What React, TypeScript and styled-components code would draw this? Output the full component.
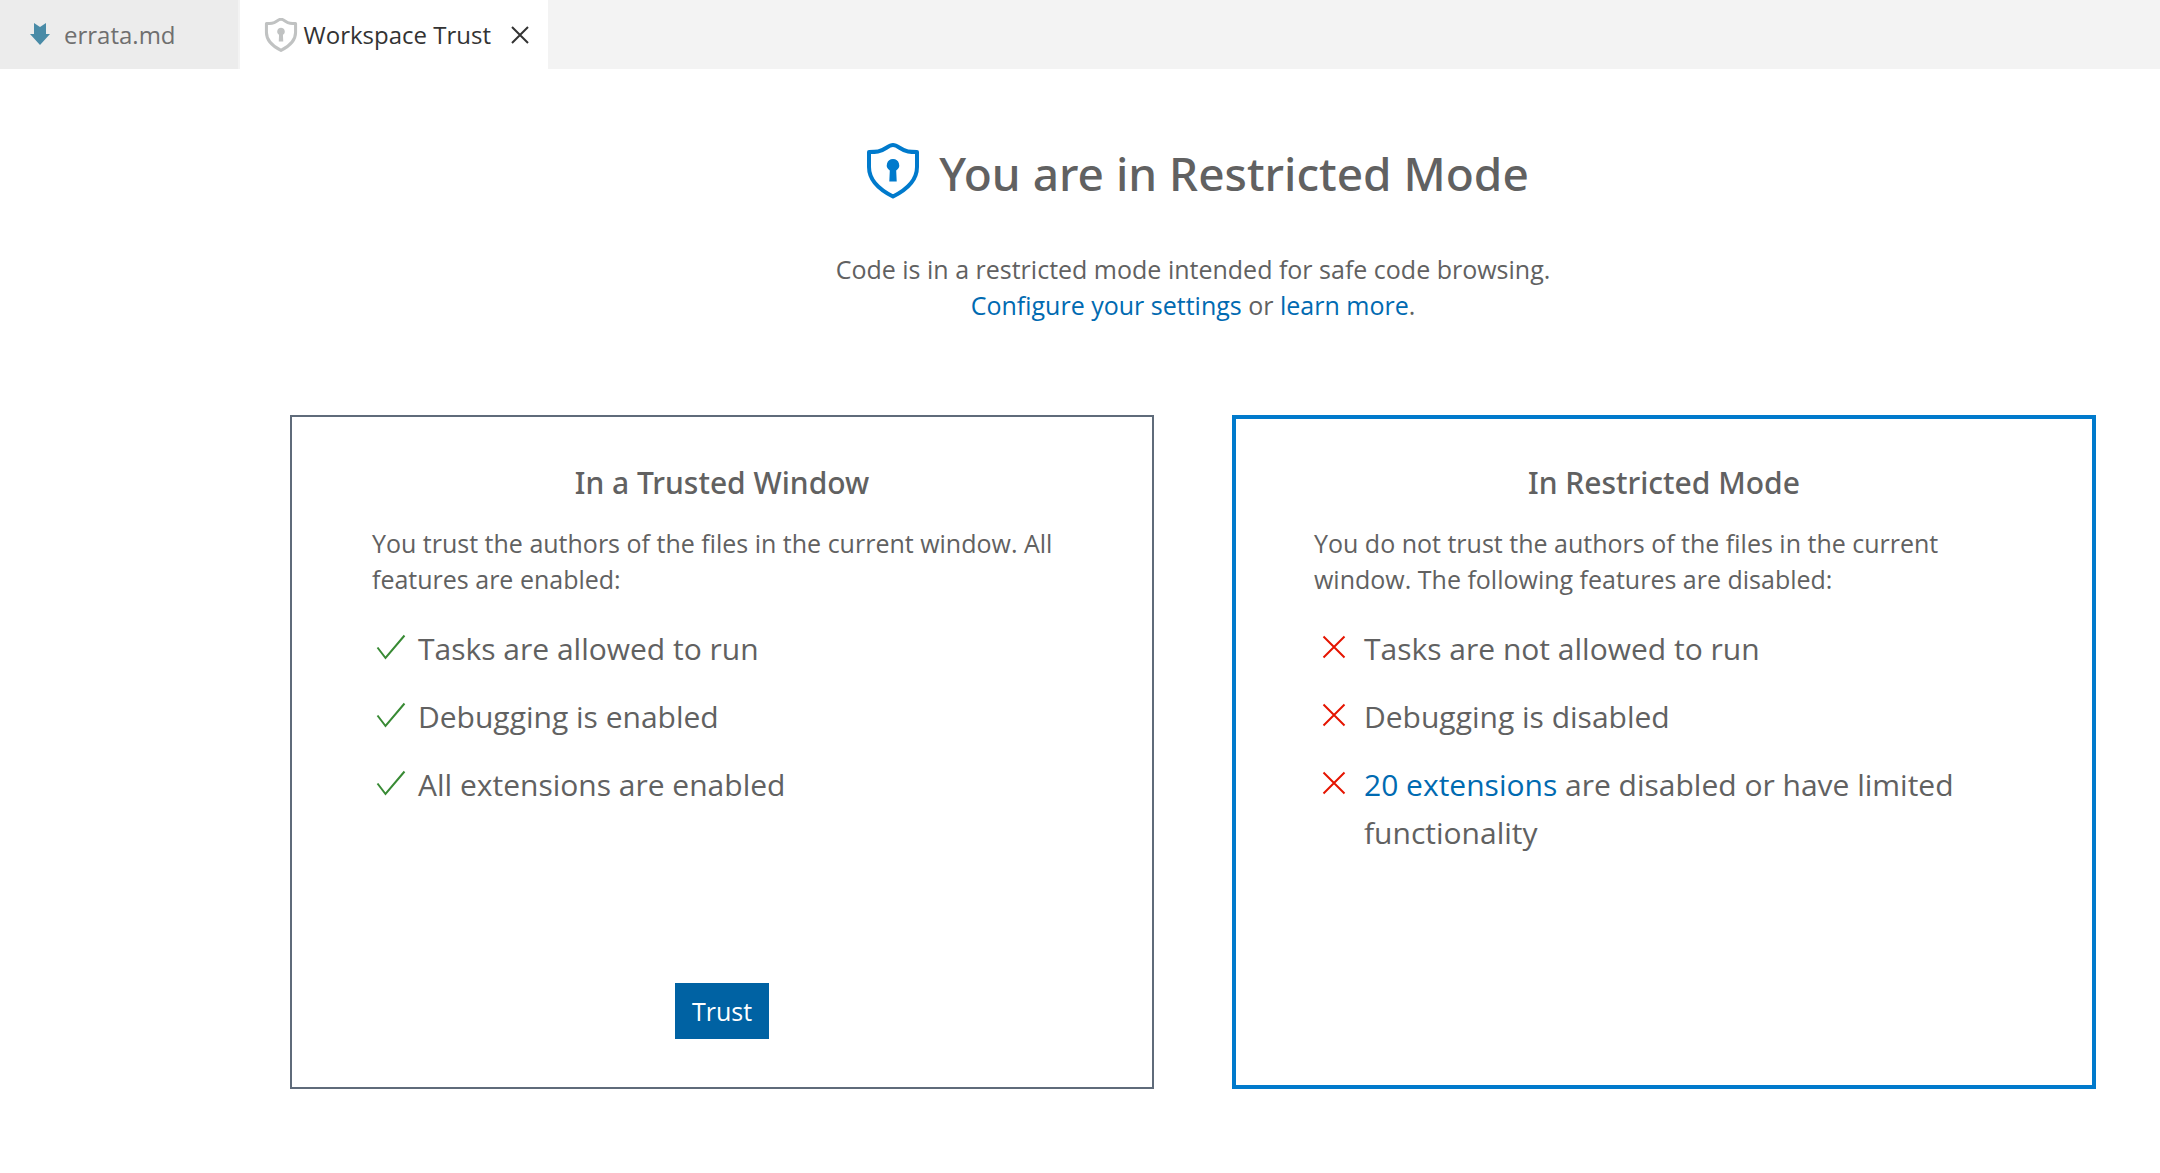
import React from "react";
import styled, { createGlobalStyle } from "styled-components";

const GlobalStyle = createGlobalStyle`
  *, *::before, *::after {
    box-sizing: border-box;
  }
  body {
    margin: 0;
    background: #ffffff;
    color: #616161;
    font-family: "Open Sans", "Noto Sans", sans-serif;
    font-size: 25px;
    line-height: 36px;
  }
`;

const TabBar = styled.nav`
  display: flex;
  height: 69px;
  background: #f3f3f3;
`;

const Tab = styled.div<{ $active?: boolean }>`
  display: flex;
  align-items: center;
  gap: ${(p) => (p.$active ? "6px" : "14px")};
  padding: ${(p) => (p.$active ? "0 15px 0 24px" : "0 62px 0 30px")};
  border-right: ${(p) => (p.$active ? "none" : "2px solid #f3f3f3")};
  background: ${(p) => (p.$active ? "#ffffff" : "#ececec")};
`;

const TabIcon = styled.span`
  display: flex;
  color: #c0c2c2;
`;

const TabLabel = styled.button<{ $active?: boolean }>`
  padding: 0;
  border: 0;
  background: none;
  color: ${(p) => (p.$active ? "#333333" : "#6f6f6f")};
  font: inherit;
  font-size: 24px;
  white-space: nowrap;
  cursor: pointer;
`;

const CloseButton = styled.button`
  display: flex;
  margin-left: 10px;
  padding: 4px;
  border: 0;
  background: none;
  color: #333333;
  cursor: pointer;
`;

const Icon = styled.svg`
  display: block;
  flex: none;
`;

const Editor = styled.main`
  padding: 74px 64px 84px 290px;
`;

const Header = styled.header`
  display: flex;
  flex-direction: column;
  align-items: center;
  gap: 48px;
  text-align: center;
`;

const TitleRow = styled.div`
  display: flex;
  align-items: flex-start;
  gap: 18px;
  padding-left: 8px;
  color: #007acc;
`;

const Title = styled.h1`
  margin: 0;
  color: #616161;
  font-family: "Noto Sans", sans-serif;
  font-size: 46px;
  font-weight: 500;
  line-height: 60px;
`;

const Text = styled.p`
  margin: 0;
`;

const Link = styled.a`
  color: #006ab1;
  text-decoration: none;
`;

const Cards = styled.div`
  display: grid;
  grid-template-columns: 1fr 1fr;
  gap: 78px;
  margin-top: 92px;
`;

const Card = styled.section<{ $current?: boolean }>`
  display: flex;
  flex-direction: column;
  min-height: 674px;
  padding: ${(p) => (p.$current ? "38px 78px 46px" : "40px 80px 48px")};
  border: ${(p) => (p.$current ? "4px solid #007acc" : "2px solid #5f6b7a")};
`;

const CardTitle = styled.h2`
  margin: 0 0 16px;
  font-family: "Noto Sans", sans-serif;
  font-size: 30px;
  font-weight: 500;
  line-height: 52px;
  text-align: center;
`;

const FeatureList = styled.ul`
  display: flex;
  flex-direction: column;
  gap: 20px;
  margin: 28px 0 0;
  padding: 0;
  list-style: none;
  font-size: 30px;
  line-height: 48px;
`;

const Feature = styled.li<{ $allowed: boolean }>`
  display: flex;
  gap: ${(p) => (p.$allowed ? "10px" : "14px")};
  color: ${(p) => (p.$allowed ? "#388a34" : "#e51400")};
`;

const Mark = styled(Icon)`
  margin-top: 4px;
`;

const FeatureText = styled.span`
  color: #616161;
`;

const Actions = styled.div`
  display: flex;
  justify-content: center;
  margin-top: auto;
`;

const TrustButton = styled.button`
  padding: 10px 17px;
  border: 0;
  background: #0062a3;
  color: #ffffff;
  font: inherit;
  cursor: pointer;
`;

function Shield({ size, thickness }: { size: number; thickness: number }) {
  return (
    <Icon width={size} height={size} viewBox="0 0 56 56" fill="none" aria-hidden="true">
      <path
        d="M28 2C33 2 36 7.500 43 8.500C46 9 49 9 52 9V24C52 37 43 46 28 53.500C13 46 4 37 4 24V9C7 9 10 9 13 8.500C20 7.500 23 2 28 2Z"
        stroke="currentColor"
        strokeWidth={thickness}
        strokeLinejoin="round"
      />
      <path
        d="M28 16a6.200 6.200 0 0 0-3.200 11.500L24.300 38.500h7.400L31.200 27.500A6.200 6.200 0 0 0 28 16Z"
        fill="currentColor"
      />
    </Icon>
  );
}

function FeatureItem({ allowed, children }: { allowed: boolean; children: React.ReactNode }) {
  return (
    <Feature $allowed={allowed}>
      <Mark width="36" height="36" viewBox="0 0 36 36" fill="none" stroke="currentColor" strokeWidth="2" aria-hidden="true">
        {allowed ? <path d="M5.500 18.500L13.500 29L32.500 6.500" /> : <path d="M9.500 7.500L30.500 28.500M30.500 7.500L9.500 28.500" />}
      </Mark>
      <FeatureText>{children}</FeatureText>
    </Feature>
  );
}

export default function App() {
  return (
    <>
      <GlobalStyle />
      <TabBar aria-label="Open editors">
        <Tab>
          <Icon width="20" height="23" viewBox="0 0 20 23" fill="#498ba7" aria-hidden="true">
            <path d="M4 0L10 4L16 0V11H20L10 22L0 11H4Z" />
          </Icon>
          <TabLabel type="button">errata.md</TabLabel>
        </Tab>
        <Tab $active>
          <TabIcon>
            <Shield size={34} thickness={5} />
          </TabIcon>
          <TabLabel $active type="button">Workspace Trust</TabLabel>
          <CloseButton type="button" aria-label="Close">
            <Icon width="18" height="18" viewBox="0 0 18 18" stroke="currentColor" strokeWidth="2" aria-hidden="true">
              <path d="M1 1L17 17M17 1L1 17" />
            </Icon>
          </CloseButton>
        </Tab>
      </TabBar>
      <Editor>
        <Header>
          <TitleRow>
            <Shield size={56} thickness={4} />
            <Title>You are in Restricted Mode</Title>
          </TitleRow>
          <Text>
            Code is in a restricted mode intended for safe code browsing.
            <br />
            <Link href="#settings">Configure your settings</Link> or <Link href="#learn-more">learn more</Link>.
          </Text>
        </Header>
        <Cards>
          <Card>
            <CardTitle>In a Trusted Window</CardTitle>
            <Text>You trust the authors of the files in the current window. All features are enabled:</Text>
            <FeatureList>
              <FeatureItem allowed>Tasks are allowed to run</FeatureItem>
              <FeatureItem allowed>Debugging is enabled</FeatureItem>
              <FeatureItem allowed>All extensions are enabled</FeatureItem>
            </FeatureList>
            <Actions>
              <TrustButton type="button">Trust</TrustButton>
            </Actions>
          </Card>
          <Card $current>
            <CardTitle>In Restricted Mode</CardTitle>
            <Text>You do not trust the authors of the files in the current window. The following features are disabled:</Text>
            <FeatureList>
              <FeatureItem allowed={false}>Tasks are not allowed to run</FeatureItem>
              <FeatureItem allowed={false}>Debugging is disabled</FeatureItem>
              <FeatureItem allowed={false}>
                <Link href="#extensions">20 extensions</Link> are disabled or have limited functionality
              </FeatureItem>
            </FeatureList>
          </Card>
        </Cards>
      </Editor>
    </>
  );
}
